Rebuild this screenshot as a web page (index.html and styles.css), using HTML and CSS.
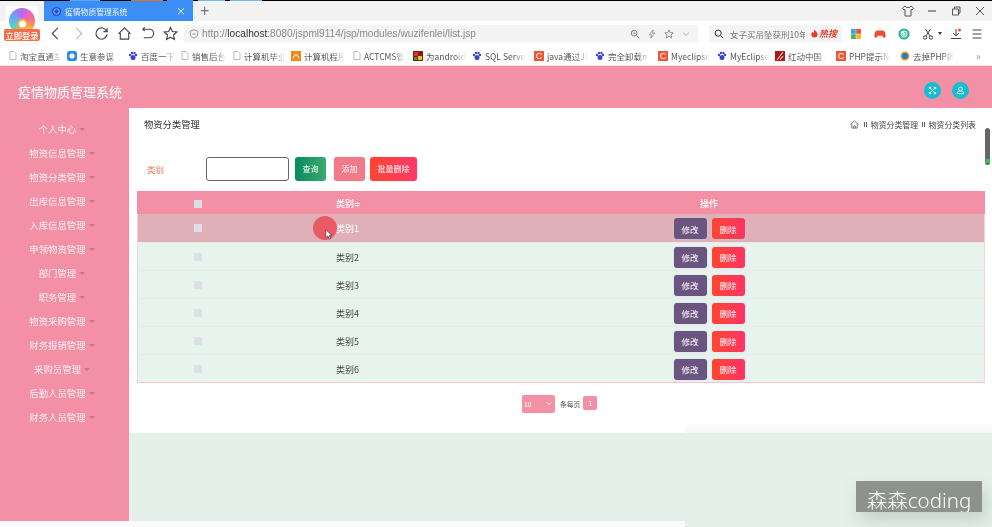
FILE: index.html
```html
<!DOCTYPE html>
<html lang="zh-CN">
<head>
<meta charset="utf-8">
<title>疫情物质管理系统</title>
<link rel="stylesheet" href="styles.css">
</head>
<body>
<div class="page">
  <div class="topline"></div>
  <div class="tabbar">
    <div class="tab">
      <svg class="tab-icon" viewBox="0 0 12 12"><circle cx="6" cy="6" r="5" fill="#2454c8"/><circle cx="6" cy="6" r="3" fill="none" stroke="#9fc4ff"/></svg>
      <span class="tab-title">疫情物质管理系统</span>
      <span class="tab-close">×</span>
    </div>
    <span class="tab-plus">+</span>
    <div class="winctl">
      <svg class="ic" viewBox="0 0 14 14"><path d="M4 2 1.500 4l1.500 2 1-.5V12h6V5.500l1 .5 1.500-2L10 2 8.500 3.500h-3z" fill="none" stroke="#555"/></svg>
      <svg class="ic" viewBox="0 0 14 14"><path d="M3 7h8" stroke="#555" stroke-width="1.200"/></svg>
      <svg class="ic" viewBox="0 0 14 14"><path d="M3.500 5h6v6h-6zM5.500 5V3h5.500v6H9.500" fill="none" stroke="#555"/></svg>
      <svg class="ic" viewBox="0 0 14 14"><path d="m3 3 8 8M11 3l-8 8" stroke="#555"/></svg>
    </div>
  </div>
  <div class="toolbar">
    <div class="nav">
      <svg class="nav-ic" viewBox="0 0 16 16"><path d="M10.500 2 4.500 8l6 6" fill="none" stroke="#444" stroke-width="1.200"/></svg>
      <svg class="nav-ic" viewBox="0 0 16 16"><path d="m5.500 2 6 6-6 6" fill="none" stroke="#bbb" stroke-width="1.200"/></svg>
      <svg class="nav-ic" viewBox="0 0 16 16"><path d="M13.500 5.500A6 6 0 1 0 14 9M14 2v4h-4" fill="none" stroke="#444" stroke-width="1.200"/></svg>
      <svg class="nav-ic" viewBox="0 0 16 16"><path d="M1.500 8.500 8 2l6.500 6.500M3.500 7.500V14h9V7.500" fill="none" stroke="#444" stroke-width="1.200"/></svg>
      <svg class="nav-ic" viewBox="0 0 16 16"><path d="M3 3.500h7a4.200 4.200 0 0 1 0 9H4M5 1.500l-2 2 2 2" fill="none" stroke="#444" stroke-width="1.200"/></svg>
      <svg class="nav-ic" viewBox="0 0 16 16"><path d="m8 1.500 2 4.400 4.700.5-3.500 3.200 1 4.700L8 11.900l-4.200 2.400 1-4.700L1.300 6.400 6 5.900z" fill="none" stroke="#444" stroke-width="1.200"/></svg>
    </div>
    <div class="address">
      <svg class="shield" viewBox="0 0 12 12"><path d="M6 1 1.500 2.500V6c0 2.500 2 4 4.500 5 2.500-1 4.500-2.500 4.500-5V2.500z M4 6h4" fill="none" stroke="#888"/></svg>
      <span class="url">http://<b>localhost</b>:8080/jspml9114/jsp/modules/wuzifenlei/list.jsp</span>
      <div class="addr-tools">
        <svg class="small-ic" viewBox="0 0 12 12"><circle cx="5" cy="5" r="3.500" fill="none" stroke="#666"/><path d="M3.500 5h3M8 8l3 3" stroke="#666"/></svg>
        <svg class="small-ic" viewBox="0 0 12 12"><path d="M7.500 1 2.500 7h3l-1 4 5-6h-3z" fill="none" stroke="#888"/></svg>
        <svg class="small-ic" viewBox="0 0 12 12"><path d="m6 1 1.500 3.300 3.500.4-2.600 2.400.7 3.500L6 8.800l-3.100 1.800.7-3.500L1 4.700l3.500-.4z" fill="none" stroke="#777"/></svg>
        <svg class="small-ic" viewBox="0 0 12 12"><path d="m2.500 4.500 3.500 3 3.500-3" fill="none" stroke="#999"/></svg>
      </div>
    </div>
    <div class="search">
      <svg class="search-ic" viewBox="0 0 12 12"><circle cx="5" cy="5" r="3.700" fill="none" stroke="#333" stroke-width="1.200"/><path d="m8 8 3 3" stroke="#333" stroke-width="1.200"/></svg>
      <span class="search-text">女子买吊坠获刑10年</span>
      <svg class="flame" viewBox="0 0 8 10"><path d="M4 0c.5 2 3.500 3 3.500 6A3.500 3.500 0 0 1 .5 6C.5 4.500 1.500 3.500 2 3c0 1 .5 1.500 1 1.500C3.500 3 3.500 1.500 4 0z" fill="#e8392c"/></svg>
      <span class="hot">热搜</span>
    </div>
    <div class="tools">
      <svg class="tool-ic" viewBox="0 0 12 12"><rect x="1" y="1" width="4.800" height="4.800" fill="#3ea3e8"/><rect x="6.200" y="1" width="4.800" height="4.800" fill="#f0503c"/><rect x="1" y="6.200" width="4.800" height="4.800" fill="#46b46a"/><rect x="6.200" y="6.200" width="4.800" height="4.800" fill="#f5b82e"/></svg>
      <svg class="tool-ic" viewBox="0 0 14 12"><path d="M4 2h6c2.500 0 3.500 3 3.500 6 0 3-2 3-3 1.500L9.500 8h-5l-1 1.500C2.500 11 .5 11 .5 8s1-6 3.500-6z" fill="#ee4b30"/></svg>
      <svg class="tool-ic" viewBox="0 0 12 12"><circle cx="6" cy="6" r="4.500" fill="none" stroke="#1eb59a" stroke-width="2.200"/><path d="M6 4a2 2 0 1 1-1.800 1.100" fill="none" stroke="#1eb59a"/></svg>
      <svg class="tool-ic" viewBox="0 0 12 12"><circle cx="3" cy="9.500" r="1.700" fill="none" stroke="#444"/><circle cx="9" cy="9.500" r="1.700" fill="none" stroke="#444"/><path d="M4 8 8.500 1M8 8 3.500 1" stroke="#444"/></svg>
      <span class="tool-caret"></span>
      <svg class="tool-ic" viewBox="0 0 12 12"><path d="M6 1v6.500M3 5l3 3 3-3M1 10.500h10" fill="none" stroke="#444"/><circle cx="9.500" cy="2" r="1.500" fill="#ee4b30"/></svg>
      <svg class="tool-ic tool-menu" viewBox="0 0 12 12"><path d="M1.500 2h9M1.500 6h9M1.500 10h9" stroke="#444"/></svg>
    </div>
  </div>
  <div class="bookmarks">
    <div class="bm"><svg class="bm-ic" viewBox="0 0 8 9"><path d="M1 .5h4l2 2v6H1z" fill="#fff" stroke="#bbb"/></svg><span class="bm-text">淘宝直通车</span></div>
    <div class="bm"><svg class="bm-ic bm-ic-big" viewBox="0 0 10 10"><rect width="10" height="10" rx="2" fill="#2f8fe8"/><circle cx="5" cy="5" r="2.500" fill="#fff"/></svg><span class="bm-text">生意参谋 -</span></div>
    <div class="bm"><svg class="bm-ic bm-ic-big" viewBox="0 0 10 10"><circle cx="5" cy="6.500" r="2.500" fill="#3b45c8"/><circle cx="2" cy="4" r="1.200" fill="#3b45c8"/><circle cx="8" cy="4" r="1.200" fill="#3b45c8"/><circle cx="4" cy="2" r="1.200" fill="#3b45c8"/><circle cx="6.500" cy="2" r="1.200" fill="#3b45c8"/></svg><span class="bm-text">百度一下</span></div>
    <div class="bm"><svg class="bm-ic" viewBox="0 0 8 9"><path d="M1 .5h4l2 2v6H1z" fill="#fff" stroke="#bbb"/></svg><span class="bm-text">销售后台</span></div>
    <div class="bm"><svg class="bm-ic" viewBox="0 0 8 9"><path d="M1 .5h4l2 2v6H1z" fill="#fff" stroke="#bbb"/></svg><span class="bm-text">计算机毕业</span></div>
    <div class="bm"><svg class="bm-ic bm-ic-big" viewBox="0 0 10 10"><rect width="10" height="10" fill="#f08a1e"/><path d="M2 7 5 3l3 4" fill="none" stroke="#fff"/></svg><span class="bm-text">计算机程序</span></div>
    <div class="bm"><svg class="bm-ic" viewBox="0 0 8 9"><path d="M1 .5h4l2 2v6H1z" fill="#fff" stroke="#bbb"/></svg><span class="bm-text">ACTCMS管</span></div>
    <div class="bm"><svg class="bm-ic bm-ic-big" viewBox="0 0 10 10"><rect width="10" height="10" fill="#7a1f14"/><rect x="1" y="1" width="4" height="4" fill="#e83020"/><rect x="5" y="5" width="4" height="4" fill="#f0c020"/><rect x="1" y="6" width="3" height="3" fill="#30a040"/></svg><span class="bm-text">为android</span></div>
    <div class="bm"><svg class="bm-ic bm-ic-big" viewBox="0 0 10 10"><circle cx="5" cy="6.500" r="2.500" fill="#3b45c8"/><circle cx="2" cy="4" r="1.200" fill="#3b45c8"/><circle cx="8" cy="4" r="1.200" fill="#3b45c8"/><circle cx="4" cy="2" r="1.200" fill="#3b45c8"/><circle cx="6.500" cy="2" r="1.200" fill="#3b45c8"/></svg><span class="bm-text">SQL Server</span></div>
    <div class="bm"><span class="c-ic">C</span><span class="bm-text">java通过JD</span></div>
    <div class="bm"><svg class="bm-ic bm-ic-big" viewBox="0 0 10 10"><circle cx="5" cy="6.500" r="2.500" fill="#3b45c8"/><circle cx="2" cy="4" r="1.200" fill="#3b45c8"/><circle cx="8" cy="4" r="1.200" fill="#3b45c8"/><circle cx="4" cy="2" r="1.200" fill="#3b45c8"/><circle cx="6.500" cy="2" r="1.200" fill="#3b45c8"/></svg><span class="bm-text">完全卸载my</span></div>
    <div class="bm"><span class="c-ic">C</span><span class="bm-text">Myeclipse</span></div>
    <div class="bm"><svg class="bm-ic bm-ic-big" viewBox="0 0 10 10"><circle cx="5" cy="6.500" r="2.500" fill="#3b45c8"/><circle cx="2" cy="4" r="1.200" fill="#3b45c8"/><circle cx="8" cy="4" r="1.200" fill="#3b45c8"/><circle cx="4" cy="2" r="1.200" fill="#3b45c8"/><circle cx="6.500" cy="2" r="1.200" fill="#3b45c8"/></svg><span class="bm-text">MyEclipse</span></div>
    <div class="bm"><svg class="bm-ic bm-ic-big" viewBox="0 0 10 10"><rect width="10" height="10" fill="#b01818"/><path d="M2 9 8 1M5 9l3-4" stroke="#fff"/></svg><span class="bm-text">红动中国 -</span></div>
    <div class="bm"><span class="c-ic">C</span><span class="bm-text">PHP提示No</span></div>
    <div class="bm"><svg class="bm-ic bm-ic-big" viewBox="0 0 10 10"><circle cx="5" cy="5" r="4.500" fill="#e8a030"/><circle cx="5" cy="5" r="3" fill="#2a78c8"/></svg><span class="bm-text">去掉PHP的</span></div>
    <div class="bm-more">»</div>
  </div>

  <header class="app-header">
    <h1 class="app-title">疫情物质管理系统</h1>
    <div class="header-actions">
      <span class="round-btn"><svg viewBox="0 0 10 10"><path d="m1.500 1.500 7 7M8.500 1.500l-7 7M1.500 1.500h2M1.500 1.500v2M8.500 8.500h-2M8.500 8.500v-2M8.500 1.500h-2M8.500 1.500v2M1.500 8.500h2M1.500 8.500v-2" fill="none" stroke="#fff"/></svg></span>
      <span class="round-btn"><svg viewBox="0 0 10 10"><circle cx="5" cy="3.300" r="2.200" fill="none" stroke="#fff"/><path d="M3.800 5.500 1.500 7.500v1h7v-1l-2.300-2" fill="none" stroke="#fff"/></svg></span>
    </div>
  </header>

  <div class="app-body">
    <nav class="sidebar">
      <a class="menu-item">个人中心</a>
      <a class="menu-item">物资信息管理</a>
      <a class="menu-item">物资分类管理</a>
      <a class="menu-item">出库信息管理</a>
      <a class="menu-item">入库信息管理</a>
      <a class="menu-item">申领物资管理</a>
      <a class="menu-item">部门管理</a>
      <a class="menu-item">职务管理</a>
      <a class="menu-item">物资采购管理</a>
      <a class="menu-item">财务报销管理</a>
      <a class="menu-item">采购员管理</a>
      <a class="menu-item">后勤人员管理</a>
      <a class="menu-item">财务人员管理</a>
    </nav>
    <main class="main">
      <section class="panel">
        <div class="page-head">
          <span class="page-title">物资分类管理</span>
          <span class="crumbs">
            <svg class="home" viewBox="0 0 10 10"><path d="M.5 5 5 1l4.500 4M2 4v5h6V4M4 9V6.500h2V9" fill="none" stroke="#555" stroke-width=".8"/></svg>
            <span class="sep">Ⅱ</span>物资分类管理<span class="sep">Ⅱ</span>物资分类列表
          </span>
        </div>
        <form class="filter">
          <label class="filter-label">类别</label>
          <input class="filter-input" type="text">
          <button class="btn btn-query" type="button">查询</button>
          <button class="btn btn-add" type="button">添加</button>
          <button class="btn btn-batch" type="button">批量删除</button>
        </form>
        <table class="grid">
          <colgroup><col class="col-check"><col class="col-name"><col></colgroup>
          <thead>
            <tr><th><span class="check"></span></th><th>类别<span class="sort">≑</span></th><th>操作</th></tr>
          </thead>
          <tbody>
            <tr class="row-hover"><td><span class="check"></span></td><td>类别1</td><td class="ops"><button class="btn btn-edit" type="button">修改</button><button class="btn btn-del" type="button">删除</button></td></tr>
            <tr><td><span class="check"></span></td><td>类别2</td><td class="ops"><button class="btn btn-edit" type="button">修改</button><button class="btn btn-del" type="button">删除</button></td></tr>
            <tr><td><span class="check"></span></td><td>类别3</td><td class="ops"><button class="btn btn-edit" type="button">修改</button><button class="btn btn-del" type="button">删除</button></td></tr>
            <tr><td><span class="check"></span></td><td>类别4</td><td class="ops"><button class="btn btn-edit" type="button">修改</button><button class="btn btn-del" type="button">删除</button></td></tr>
            <tr><td><span class="check"></span></td><td>类别5</td><td class="ops"><button class="btn btn-edit" type="button">修改</button><button class="btn btn-del" type="button">删除</button></td></tr>
            <tr><td><span class="check"></span></td><td>类别6</td><td class="ops"><button class="btn btn-edit" type="button">修改</button><button class="btn btn-del" type="button">删除</button></td></tr>
          </tbody>
        </table>
        <div class="pager">
          <div class="page-size">10<svg viewBox="0 0 8 6"><path d="m1 1.500 3 3 3-3" fill="none" stroke="#fff" stroke-width="1.200"/></svg></div>
          <span class="pager-text">条每页</span>
          <span class="page-num">1</span>
        </div>
      </section>
    </main>
  </div>
  <div class="foot-strip"></div>

  <!-- overlays -->
  <div class="app-logo">
    <span class="logo-disc"></span>
    <span class="logo-badge">立即登录</span>
  </div>
  <div class="scroll-thumb"></div>
  <div class="click-dot"></div>
  <svg class="cursor" viewBox="0 0 10 14"><path d="M1 1v10l2.500-2.200L5.500 13l1.800-.8-2-4.200H8.500z" fill="#fff" stroke="#333" stroke-width=".8"/></svg>
  <div class="video-fade"></div>
  <div class="watermark">森森coding</div>
</div>
</body>
</html>
```
FILE: styles.css
```css
* { box-sizing: border-box; }
html, body { margin: 0; height: 100%; overflow: hidden; background: #fff; }
body { font-family: "Noto Sans CJK SC", "Noto Sans", sans-serif; }

.page {
  position: relative;
  width: 992px;
  height: 527px;
  overflow: hidden;
  display: flex;
  flex-direction: column;
  filter: blur(0.35px);
}

.topline {
  height: 1px;
  flex: none;
  background: linear-gradient(90deg,
    #000 70px, #5aa8ee 70px, #5aa8ee 100px, #000 100px,
    #000 131px, #e8701a 131px, #e8701a 163px, #000 163px,
    #000 167px, #3b8ef5 167px, #3b8ef5 193px, #000 193px,
    #000 198px, #7ab8f0 198px, #7ab8f0 225px, #000 225px,
    #000 230px, #7ab8f0 230px, #7ab8f0 262px, #000 262px);
}

.tabbar {
  height: 20px;
  flex: none;
  background: #f2f2f2;
  display: flex;
  align-items: center;
  padding-left: 44px;
}
.tab {
  width: 149px;
  height: 20px;
  background: #3b8ef5;
  display: flex;
  align-items: center;
  padding: 0 7px;
  color: #fff;
}
.tab-icon { width: 11px; height: 11px; flex: none; }
.tab-title { font-size: 7.800px; margin-left: 3px; width: 100px; white-space: nowrap; opacity: .9; }
.tab-close { margin-left: auto; font-size: 10px; line-height: 1; opacity: .9; }
.tab-plus { margin-left: 7px; font: 300 16px/1 "Liberation Sans", sans-serif; color: #777; }
.winctl { margin-left: auto; display: flex; gap: 10px; padding-right: 5px; }
.ic { width: 14px; height: 14px; display: block; }

.toolbar {
  height: 25px;
  flex: none;
  background: #fff;
  display: flex;
  align-items: center;
  padding-left: 48px;
}
.nav { display: flex; gap: 8px; width: 136px; }
.nav-ic { width: 15px; height: 15px; flex: none; }
.address {
  width: 514px;
  height: 17px;
  background: #f4f4f4;
  display: flex;
  align-items: center;
  padding: 0 6px;
}
.shield { width: 10px; height: 10px; flex: none; margin-right: 3px; margin-left: -1px; }
.url { font: 10.150px "Liberation Sans", sans-serif; color: #8a8a8a; white-space: nowrap; }
.url b { font-weight: 400; color: #333; }
.addr-tools { margin-left: auto; display: flex; gap: 7px; align-items: center; padding-right: 1px; }
.small-ic { width: 10px; height: 10px; }
.search {
  margin-left: 11px;
  width: 133px;
  height: 17px;
  background: #f4f4f4;
  display: flex;
  align-items: center;
  padding-left: 5px;
}
.search-ic { width: 10px; height: 10px; flex: none; }
.search-text { margin-left: 6px; width: 75px; overflow: hidden; white-space: nowrap; font-size: 8.500px; color: #777; }
.flame { width: 7px; height: 9px; margin-left: 6px; flex: none; }
.hot { margin-left: 1px; font-size: 9px; font-style: italic; font-weight: 700; color: #e8392c; }
.tools { display: flex; align-items: center; margin-left: 8px; gap: 12px; }
.tool-ic { width: 12px; height: 12px; flex: none; }
.tool-caret { width: 0; height: 0; margin: 0 -4px 0 -8px; border: 2px solid transparent; border-top: 3px solid #333; border-bottom: 0; }
.tool-menu { margin-left: -3px; }

.bookmarks {
  height: 20px;
  flex: none;
  background: #fff;
  display: grid;
  grid-template-columns: 58px 61px 53px 52px 58px 62px 60px 59px 62px 61px 63px 59px 58px 61px 64px 76px 16px;
  align-items: center;
  padding-left: 9px;
  border-bottom: 1px solid #f0e4e8;
}
.bm { display: flex; align-items: center; gap: 3px; min-width: 0; overflow: hidden; }
.bm-ic { width: 8px; height: 9px; flex: none; }
.bm-ic-big { width: 10px; height: 10px; }
.c-ic {
  width: 10px; height: 10px; flex: none;
  background: #f0573a; color: #fff;
  font: 9px/10px "Liberation Sans", sans-serif; text-align: center;
}
.bm-text {
  max-width: 41px; overflow: hidden; white-space: nowrap;
  font-size: 8.500px; color: #555;
  -webkit-mask-image: linear-gradient(90deg, #000 72%, transparent);
  mask-image: linear-gradient(90deg, #000 72%, transparent);
}
.bm-more { font-size: 10px; color: #999; }

.app-header {
  height: 42px;
  flex: none;
  background: #f490a6;
  display: flex;
  align-items: center;
  padding: 8px 23px 0 18px;
}
.app-title { margin: 0; font-size: 13px; font-weight: 400; color: #fff; line-height: 1; }
.header-actions { margin-left: auto; display: flex; gap: 11px; margin-top: -2px; }
.round-btn {
  width: 17px; height: 17px; border-radius: 50%;
  background: #14bdd4; display: flex; align-items: center; justify-content: center;
}
.round-btn svg { width: 9px; height: 9px; }

.app-body { height: 413px; flex: none; display: flex; }
.sidebar {
  width: 129px;
  flex: none;
  background: #f490a6;
  display: flex;
  flex-direction: column;
  padding-top: 9px;
}
.menu-item {
  height: 24px;
  display: flex;
  align-items: center;
  justify-content: center;
  padding-right: 5px;
  font-size: 9.400px;
  color: #fdeef1;
}
.menu-item::after {
  content: "";
  margin-left: 3px;
  border: 3px solid transparent;
  border-top: 3px solid #c4768c;
  border-bottom: 0;
}

.main { flex: 1; background: #e6f0ea; }
.panel { background: #fff; height: 325px; padding: 0 7px 0 8px; }
.page-head {
  height: 34px;
  display: flex;
  align-items: center;
  justify-content: space-between;
  padding: 0 9px 2px 7px;
}
.page-title { font-size: 9.300px; color: #333; }
.crumbs { font-size: 7.900px; color: #444; display: flex; align-items: center; }
.home { width: 9px; height: 9px; margin-right: 1px; }
.sep { color: #555; margin: 0 2px; font-size: 6.500px; font-weight: 700; }

.filter {
  height: 49px;
  padding-top: 15px;
  display: flex;
  align-items: flex-start;
  padding-left: 10px;
}
.filter-label { width: 59px; line-height: 24px; font-size: 8.500px; color: #f0775a; }
.filter-input {
  width: 83px; height: 24px; margin: 0 6px 0 0; padding: 0;
  border: 1px solid #666; border-radius: 3px; background: #fff;
}
.btn {
  border: 0; padding: 0; border-radius: 3px; color: #fff;
  font-family: inherit; font-size: 8px; line-height: 1;
  box-shadow: 0 0 2px #b8d4ec;
}
.btn-query { width: 31px; height: 24px; margin-right: 8px; background: linear-gradient(90deg, #0a8a60, #3aaa6f); }
.btn-add { width: 31px; height: 24px; margin-right: 5px; background: #f07a88; }
.btn-batch { width: 47px; height: 24px; background: linear-gradient(90deg, #ff4530, #ff3a6a); }

.grid {
  width: 848px;
  table-layout: fixed;
  border-collapse: collapse;
  font-size: 9px;
}
.col-check { width: 122px; }
.col-name { width: 176px; }
.grid th {
  height: 23px;
  padding: 2px 0 0;
  background: #f490a6;
  color: #fff;
  font-weight: 500;
  text-align: center;
}
.grid th:nth-child(2), .grid td:nth-child(2) { text-align: left; padding-left: 77px; }
.grid th:last-child { padding-right: 2px; }
.grid td {
  height: 28px;
  padding: 2px 0 0;
  background: #e7f4ee;
  color: #444;
  text-align: center;
  border-bottom: 1px solid #efe6ea;
}
.grid tbody tr:last-child td { border-bottom-color: #f2c4d0; }
.grid td:first-child { box-shadow: inset 1px 0 #f2d4dc; }
.grid td:last-child { box-shadow: inset -1px 0 #f2d4dc; }
.grid .row-hover td { background: #e0b0b8; color: #fff; }
.check { display: block; width: 8px; height: 8px; margin: 0 auto; background: #dcdfe6; }
.grid td .check { margin-top: -1px; }
.sort { font-size: 8px; }
.grid td.ops { white-space: nowrap; padding-right: 2px; }
.btn-edit, .btn-del { width: 33px; height: 21px; font-size: 8.500px; vertical-align: middle; }
.btn-edit { background: #6b5580; margin-right: 5px; }
.btn-del { background: linear-gradient(90deg, #ff4530, #ff3465); }

.pager {
  display: flex;
  align-items: center;
  padding: 12px 0 0 385px;
  font-size: 6.800px;
  color: #555;
}
.page-size {
  width: 33px; height: 18px; border-radius: 2px;
  background: #f490a6; color: #fff;
  display: flex; align-items: center; justify-content: space-between;
  padding: 0 3px 0 2px;
}
.page-size svg { width: 6px; height: 5px; }
.pager-text { margin: 0 3px 0 5px; }
.page-num {
  width: 14px; height: 14px; border-radius: 2px;
  background: #f490a6; color: #fff; text-align: center; line-height: 14px;
  margin-top: -1px;
}

.foot-strip { flex: 1; background: #fbfbfb; }

/* overlays */
.app-logo { position: absolute; left: 4px; top: 6px; width: 36px; height: 35px; }
.logo-disc {
  position: absolute; left: 2px; top: 0; width: 32px; height: 32px;
  background: #fff;
}
.logo-disc::after {
  content: ""; position: absolute; left: 3px; top: 2px; width: 26px; height: 26px; border-radius: 50%;
  background: radial-gradient(circle at 52% 62%, #fff 0 3px, #f4a84a 4px 5px, transparent 6px),
    conic-gradient(#b06af0, #ee62c8, #f7708a, #f8a04a, #f4d24e, #8edc72, #56d0c0, #5ab4f0, #8a8cf4, #b06af0);
}
.logo-badge {
  position: absolute; left: 0; bottom: 0; width: 36px; height: 12px; border-radius: 2px;
  background: #f4704a; color: #fff; font-size: 8.300px; font-weight: 500; line-height: 12px; text-align: center;
}
.scroll-thumb {
  position: absolute; left: 985px; top: 128px; width: 5px; height: 37px; border-radius: 3px;
  background: linear-gradient(180deg, #666 0 31px, #3dbb5a 31px 35px, #666 35px);
}
.click-dot {
  position: absolute; left: 313px; top: 216px; width: 24px; height: 24px; border-radius: 50%;
  background: #ea5a64;
}
.cursor { position: absolute; left: 325px; top: 229px; width: 8px; height: 11px; }
.video-fade {
  position: absolute; left: 685px; top: 420px; right: 0; bottom: 0;
  background: linear-gradient(180deg, rgba(230,240,234,0) 0, #e6f0ea 28px);
}
.watermark {
  position: absolute; left: 856px; top: 481px; width: 126px; height: 31px;
  background: #8c928d; color: #fff;
  font: 300 20.500px/38px "Noto Sans", "Noto Sans CJK SC", sans-serif;
  text-align: center; overflow: hidden; white-space: nowrap;
  box-shadow: 4px 8px 18px rgba(110, 135, 125, .3);
}
```
